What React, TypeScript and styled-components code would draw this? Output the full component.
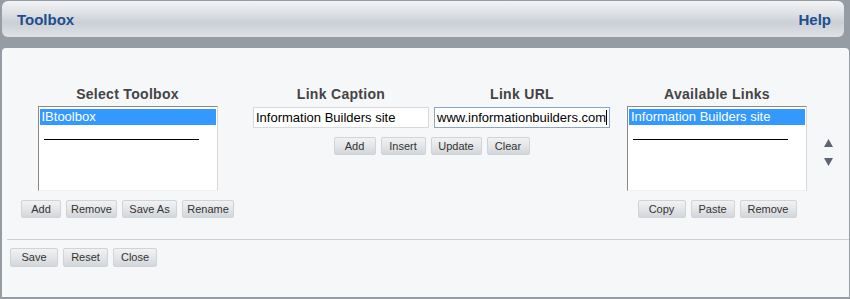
import React from "react";
import styled, { createGlobalStyle } from "styled-components";

const Global = createGlobalStyle`
  html, body { margin: 0; padding: 0; }
  body { background: #959ca4; font-family: "Liberation Sans", Arial, sans-serif; }
`;

const Frame = styled.div`
  width: 850px;
  height: 299px;
  box-sizing: border-box;
  padding: 1px 1px 2px 2px;
  display: flex;
  flex-direction: column;
  gap: 11px;
`;

const Header = styled.div`
  height: 36px;
  margin-right: 5px;
  box-sizing: border-box;
  border-radius: 6px;
  background: linear-gradient(#f3f4f6 0%, #dde0e4 35%, #cbd0d6 60%, #dfe2e6 100%);
  display: flex;
  align-items: center;
  justify-content: space-between;
  padding: 0 13px 0 15px;
`;

const HeaderLink = styled.span`
  color: #1c4f8f;
  font-weight: bold;
  font-size: 15px;
`;

const Panel = styled.div`
  flex: 1;
  background: #f6f7f9;
  border-top-left-radius: 4px;
  border-top-right-radius: 4px;
  display: flex;
  flex-direction: column;
`;

const Columns = styled.div`
  display: flex;
  padding: 38px 0 0 19px;
  height: 191px;
  box-sizing: border-box;
`;

const Column = styled.div<{ $w: number; $ml?: number }>`
  width: ${(p) => p.$w}px;
  margin-left: ${(p) => p.$ml ?? 0}px;
  display: flex;
  flex-direction: column;
  align-items: center;
`;

const Heading = styled.div`
  font-weight: bold;
  font-size: 14px;
  color: #444;
  height: 16px;
  line-height: 16px;
  letter-spacing: 0.3px;
  margin-bottom: 4px;
`;

const ListBox = styled.div`
  width: 180px;
  height: 85px;
  box-sizing: border-box;
  background: #fff;
  border: 1px solid;
  border-color: #8a8a8a #d8d8d8 #f0f0f0 #8a8a8a;
  padding: 2px 1px;
`;

const ListItem = styled.div<{ $selected?: boolean }>`
  height: 16px;
  line-height: 16px;
  font-size: 13px;
  padding-left: 2px;
  color: ${(p) => (p.$selected ? "#fff" : "#000")};
  background: ${(p) => (p.$selected ? "#3399ff" : "transparent")};
  white-space: nowrap;
`;

const Separator = styled.div`
  height: 1px;
  background: #000;
  width: 155px;
  margin: 14px 0 0 4px;
`;

const ButtonRow = styled.div<{ $mt: number }>`
  display: flex;
  gap: 5px;
  margin-top: ${(p) => p.$mt}px;
`;

const Btn = styled.button<{ $w: number; $h?: number }>`
  width: ${(p) => p.$w}px;
  height: ${(p) => p.$h ?? 18}px;
  padding: 0;
  margin: 0;
  box-sizing: border-box;
  border: 1px solid #d0d3d7;
  border-radius: 2px;
  background: linear-gradient(#f1f2f3 0%, #e2e4e7 55%, #d3d6da 100%);
  font-family: "Liberation Sans", Arial, sans-serif;
  font-size: 11px;
  color: #333;
  line-height: 1;
`;

const FieldRow = styled.div`
  display: flex;
  gap: 5px;
`;

const Field = styled.div`
  width: 176px;
  display: flex;
  flex-direction: column;
  align-items: center;
`;

const Input = styled.div<{ $focus?: boolean }>`
  width: 176px;
  height: 21px;
  margin-top: 1px;
  box-sizing: border-box;
  background: #fff;
  border: 1px solid ${(p) => (p.$focus ? "#8aa6cf" : "#d7d9dc")};
  font-size: 13px;
  line-height: 19px;
  padding-left: 2px;
  white-space: nowrap;
  overflow: hidden;
  display: flex;
`;

const Caret = styled.span`
  display: inline-block;
  width: 1px;
  height: 15px;
  background: #000;
  margin-top: 2px;
`;

const RightWrap = styled.div`
  display: flex;
  align-items: flex-start;
  margin-left: 17px;
`;

const Arrows = styled.div`
  display: flex;
  flex-direction: column;
  gap: 9px;
  margin: 52px 0 0 16px;
`;

const Divider = styled.div`
  height: 1px;
  background: #cdd0d4;
  margin: 0 0 0 5px;
`;

const Footer = styled.div`
  display: flex;
  gap: 5px;
  padding: 8px 0 0 8px;
`;

const Tri = ({ up }: { up?: boolean }) => (
  <svg width="11" height="10" viewBox="0 0 11 10">
    <polygon points={up ? "5.5,1 10,9 1,9" : "1,1 10,1 5.5,9"} fill="#5d6670" />
  </svg>
);

export default function App() {
  return (
    <>
      <Global />
      <Frame>
        <Header>
          <HeaderLink>Toolbox</HeaderLink>
          <HeaderLink>Help</HeaderLink>
        </Header>
        <Panel>
          <Columns>
            <Column $w={213}>
              <Heading>Select Toolbox</Heading>
              <ListBox>
                <ListItem $selected>IBtoolbox</ListItem>
                <Separator />
              </ListBox>
              <ButtonRow $mt={9}>
                <Btn $w={40}>Add</Btn>
                <Btn $w={51}>Remove</Btn>
                <Btn $w={55}>Save As</Btn>
                <Btn $w={52}>Rename</Btn>
              </ButtonRow>
            </Column>
            <Column $w={357} $ml={19}>
              <FieldRow>
                <Field>
                  <Heading>Link Caption</Heading>
                  <Input>Information Builders site</Input>
                </Field>
                <Field>
                  <Heading>Link URL</Heading>
                  <Input $focus>
                    www.informationbuilders.com
                    <Caret />
                  </Input>
                </Field>
              </FieldRow>
              <ButtonRow $mt={9}>
                <Btn $w={42}>Add</Btn>
                <Btn $w={45}>Insert</Btn>
                <Btn $w={51}>Update</Btn>
                <Btn $w={43}>Clear</Btn>
              </ButtonRow>
            </Column>
            <RightWrap>
              <Column $w={180}>
                <Heading>Available Links</Heading>
                <ListBox>
                  <ListItem $selected>Information Builders site</ListItem>
                  <Separator />
                </ListBox>
                <ButtonRow $mt={9}>
                  <Btn $w={48}>Copy</Btn>
                  <Btn $w={44}>Paste</Btn>
                  <Btn $w={57}>Remove</Btn>
                </ButtonRow>
              </Column>
              <Arrows>
                <Tri up />
                <Tri />
              </Arrows>
            </RightWrap>
          </Columns>
          <Divider />
          <Footer>
            <Btn $w={48} $h={19}>Save</Btn>
            <Btn $w={45} $h={19}>Reset</Btn>
            <Btn $w={44} $h={19}>Close</Btn>
          </Footer>
        </Panel>
      </Frame>
    </>
  );
}
